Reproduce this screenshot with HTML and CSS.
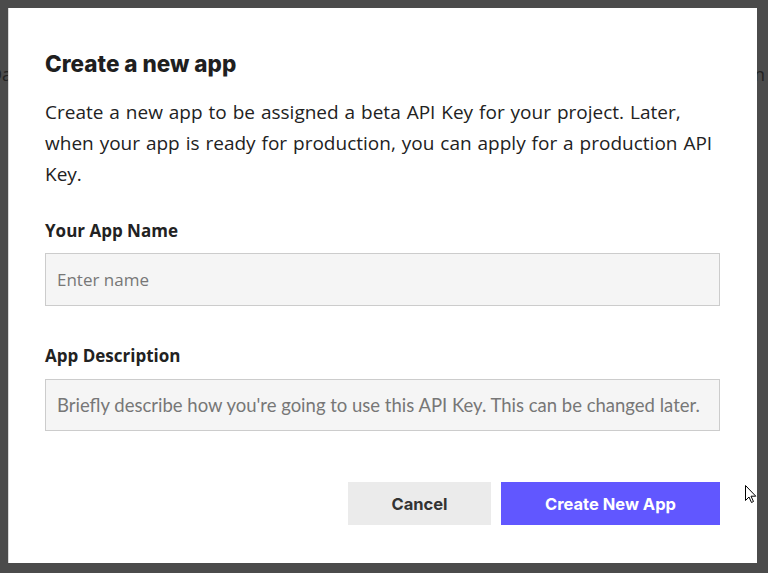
FILE: index.html
```html
<!DOCTYPE html>
<html>
<head>
<meta charset="utf-8">
<link rel="stylesheet" href="styles.css">
</head>
<body>
<div class="backdrop-text">
  <span class="bt-left">Da</span>
  <span class="bt-right">n</span>
</div>
<div class="modal">
  <h1 class="title">Create a new app</h1>
  <p class="intro">Create a new app to be assigned a beta API Key for your project. Later, when your app is ready for production, you can apply for a production API Key.</p>
  <div class="field">
    <label class="label">Your App Name</label>
    <div class="input"><span class="ph">Enter name</span></div>
  </div>
  <div class="field field-desc">
    <label class="label">App Description</label>
    <div class="input input-desc"><span class="ph ph-cond">Briefly describe how you're going to use this API Key. This can be changed later.</span></div>
  </div>
  <div class="actions">
    <button class="btn btn-cancel">Cancel</button>
    <button class="btn btn-primary">Create New App</button>
  </div>
</div>
<svg class="cursor" width="12" height="19" viewBox="0 0 12 19"><path d="M0.5 0.5 L0.5 15.5 L4 12 L6.5 17.5 L8.5 16.5 L6 11.2 L10.8 11.2 Z" fill="#fff" stroke="#000" stroke-width="1"/></svg>
</body>
</html>
```
FILE: styles.css
```css
html, body { margin: 0; padding: 0; }
body {
  background: #4b4b4b;
  width: 768px;
  height: 573px;
  overflow: hidden;
  position: relative;
  font-family: "Open Sans", "Liberation Sans", sans-serif;
  color: #222;
}
.backdrop-text {
  position: absolute;
  top: 62px;
  left: 0;
  width: 768px;
  font-size: 18px;
  color: #222;
}
.bt-left { position: absolute; left: -11px; }
.bt-right { position: absolute; left: 754px; }
.modal {
  position: relative;
  margin: 8px 0 0 8px;
  width: 749px;
  height: 555px;
  box-sizing: border-box;
  background: #fff;
  border-left: 1px solid #d8d8d8;
  padding: 43px 37px 0 36px;
}
.title {
  margin: 0;
  font-family: "Inter", "Roboto", sans-serif;
  font-weight: 800;
  font-size: 22.5px;
  line-height: 26px;
  color: #1f1f1f;
}
.intro {
  margin: 20px 0 0;
  font-size: 19px;
  line-height: 31px;
  word-spacing: 1px;
  color: #222;
}
.field { margin-top: 29px; }
.field-desc { margin-top: 38px; }
.label {
  display: block;
  font-weight: 700;
  font-size: 17px;
  line-height: 24px;
  color: #222;
}
.input {
  margin-top: 10px;
  height: 53px;
  box-sizing: border-box;
  border: 1px solid #cccccc;
  background: #f5f5f5;
  padding: 0 11px;
  display: flex;
  align-items: center;
}
.input-desc { margin-top: 11px; height: 52px; }
.ph {
  font-size: 17px;
  color: #777;
}
.ph-cond {
  font-family: "Lato", "Liberation Sans", sans-serif;
  font-size: 18.5px;
}
.actions {
  display: flex;
  justify-content: flex-end;
  gap: 10px;
  margin-top: 51px;
}
.btn {
  border: none;
  height: 43px;
  font-family: "Inter", "Roboto", sans-serif;
  font-weight: 700;
  font-size: 16.5px;
  cursor: pointer;
}
.btn-cancel {
  width: 143px;
  background: #ebebeb;
  color: #333;
}
.btn-primary {
  width: 219px;
  background: #6157ff;
  color: #fff;
}
.cursor {
  position: absolute;
  left: 745px;
  top: 485px;
}
```
